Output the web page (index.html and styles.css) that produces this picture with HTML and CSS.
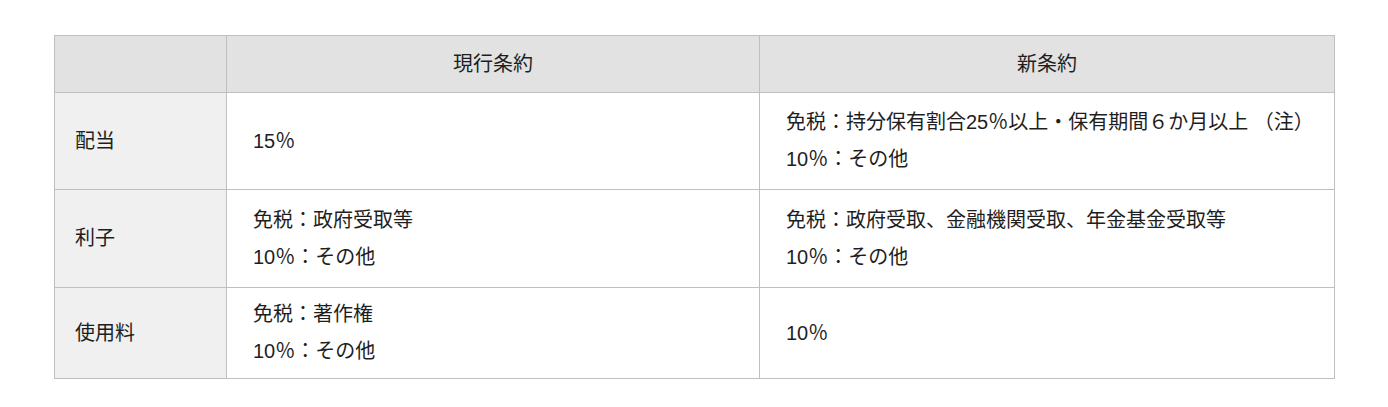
FILE: index.html
```html
<!DOCTYPE html>
<html lang="ja">
<head>
<meta charset="utf-8">
<link rel="stylesheet" href="styles.css">
</head>
<body>
<table class="tax">
  <colgroup>
    <col class="c-label">
    <col class="c-cur">
    <col class="c-new">
  </colgroup>
  <thead>
    <tr class="r-head">
      <th></th>
      <th>現行条約</th>
      <th>新条約</th>
    </tr>
  </thead>
  <tbody>
    <tr class="r-1">
      <th>配当</th>
      <td>15％</td>
      <td>免税：持分保有割合25％以上・保有期間６か月以上 （注）<br>10％：その他</td>
    </tr>
    <tr class="r-2">
      <th>利子</th>
      <td>免税：政府受取等<br>10％：その他</td>
      <td>免税：政府受取、金融機関受取、年金基金受取等<br>10％：その他</td>
    </tr>
    <tr class="r-3">
      <th>使用料</th>
      <td>免税：著作権<br>10％：その他</td>
      <td>10％</td>
    </tr>
  </tbody>
</table>
</body>
</html>
```

FILE: styles.css
```css
html, body {
  margin: 0;
  padding: 0;
  background: #ffffff;
}
body {
  padding-top: 35px;
  font-family: "Liberation Sans", "Noto Sans CJK JP", sans-serif;
  font-size: 20px;
  color: #1e1e1e;
}
.tax {
  width: 1280px;
  margin: 0 0 0 54px;
  border-collapse: collapse;
  table-layout: fixed;
}
.c-label { width: 172px; }
.c-cur { width: 533px; }
.c-new { width: 575px; }
.tax th, .tax td {
  border: 1px solid #bfbfbf;
  vertical-align: middle;
  line-height: 37px;
  font-weight: normal;
  padding: 0;
}
.tax thead th {
  background: #e2e2e2;
  text-align: center;
}
.tax tbody th {
  background: #f0f0f0;
  text-align: left;
  padding-left: 20px;
}
.tax tbody td {
  text-align: left;
  padding-left: 26px;
}
.r-head { height: 57px; }
.r-1 { height: 97px; }
.r-2 { height: 98px; }
.r-3 { height: 91px; }
```
